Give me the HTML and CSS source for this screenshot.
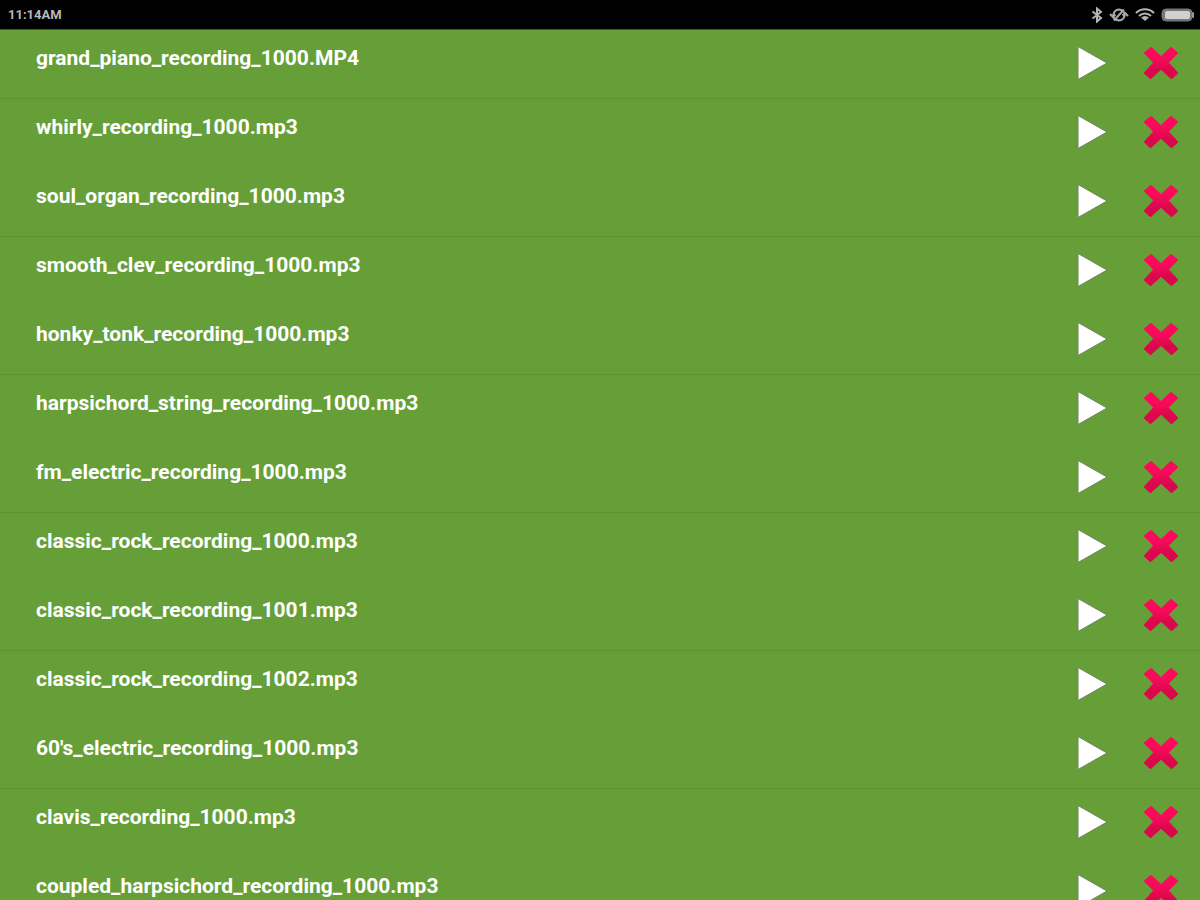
FILE: index.html
```
<!DOCTYPE html>
<html lang="en">
<head>
    <meta charset="UTF-8">
    <meta name="viewport" content="width=device-width, initial-scale=1.0">
    <title>Recordings</title>
    <link rel="stylesheet" href="styles.css">
</head>
<body>
    <!-- Shared icons -->
    <svg class="sprite" width="0" height="0" aria-hidden="true">
        <defs>
            <linearGradient id="red" x1="0" y1="0" x2="0" y2="1">
                <stop offset="0.3" stop-color="#fb0a5c"/>
                <stop offset="0.75" stop-color="#d9084c"/>
            </linearGradient>
            <symbol id="play" viewBox="0 0 32 36">
                <path d="M2 1.500L31 18L2 34.500Z" fill="#fff" stroke="#6f8560" stroke-width="1"/>
            </symbol>
            <symbol id="delete" viewBox="0 0 36 36">
                <path d="M8 3L18 12.500L28 3L34 8L24.500 17.500L34 28L28.500 33L18 23.500L7.500 33L2 28L11.500 17.500L2 8Z" fill="url(#red)" stroke="url(#red)" stroke-width="2" stroke-linejoin="round"/>
            </symbol>
        </defs>
    </svg>

    <header class="status-bar">
        <span class="time">11:14AM</span>
        <div class="status-icons">
            <svg width="12" height="16" viewBox="0 0 12 16">
                <path d="M1.500 4.500L10 11L6 14.500V1.500L10 5L1.500 11.500" fill="none" stroke="#b4b4b4" stroke-width="2"/>
            </svg>
            <svg width="20" height="16" viewBox="0 0 20 16">
                <path d="M5 12C3 6 6 2.500 10.500 2.500L13.500 3.500M15 4.500C17 10 14 13.500 9.500 13.500L6.500 12.500M5 13.500L15 2.500M1 7L4 10L6.500 7.500M13.500 8.500L16 6L19 9" fill="none" stroke="#a8a8a8" stroke-width="2"/>
            </svg>
            <svg width="20" height="16" viewBox="0 0 20 16">
                <path d="M1 6C6 1 14 1 19 6M4 9C7.500 5.500 12.500 5.500 16 9" fill="none" stroke="#b4b4b4" stroke-width="2"/>
                <path d="M6 10.500C8.500 8.500 11.500 8.500 14 10.500L10 14Z" fill="#b4b4b4"/>
            </svg>
            <svg width="34" height="16" viewBox="0 0 34 16">
                <rect x="1" y="2" width="30" height="12" rx="4" fill="#777" stroke="#777" stroke-width="1"/>
                <rect x="4" y="4" width="25" height="8" rx="2" fill="#d0d0d0"/>
                <rect x="31" y="5" width="2" height="6" rx="1" fill="#999"/>
            </svg>
        </div>
    </header>

    <ul class="recordings">
        <li class="recording">
            <span class="name">grand_piano_recording_1000.MP4</span>
            <button class="btn-play" aria-label="Play"><svg width="32" height="36"><use href="#play"/></svg></button>
            <button class="btn-delete" aria-label="Delete"><svg width="36" height="36"><use href="#delete"/></svg></button>
        </li>
        <li class="recording">
            <span class="name">whirly_recording_1000.mp3</span>
            <button class="btn-play" aria-label="Play"><svg width="32" height="36"><use href="#play"/></svg></button>
            <button class="btn-delete" aria-label="Delete"><svg width="36" height="36"><use href="#delete"/></svg></button>
        </li>
        <li class="recording">
            <span class="name">soul_organ_recording_1000.mp3</span>
            <button class="btn-play" aria-label="Play"><svg width="32" height="36"><use href="#play"/></svg></button>
            <button class="btn-delete" aria-label="Delete"><svg width="36" height="36"><use href="#delete"/></svg></button>
        </li>
        <li class="recording">
            <span class="name">smooth_clev_recording_1000.mp3</span>
            <button class="btn-play" aria-label="Play"><svg width="32" height="36"><use href="#play"/></svg></button>
            <button class="btn-delete" aria-label="Delete"><svg width="36" height="36"><use href="#delete"/></svg></button>
        </li>
        <li class="recording">
            <span class="name">honky_tonk_recording_1000.mp3</span>
            <button class="btn-play" aria-label="Play"><svg width="32" height="36"><use href="#play"/></svg></button>
            <button class="btn-delete" aria-label="Delete"><svg width="36" height="36"><use href="#delete"/></svg></button>
        </li>
        <li class="recording">
            <span class="name">harpsichord_string_recording_1000.mp3</span>
            <button class="btn-play" aria-label="Play"><svg width="32" height="36"><use href="#play"/></svg></button>
            <button class="btn-delete" aria-label="Delete"><svg width="36" height="36"><use href="#delete"/></svg></button>
        </li>
        <li class="recording">
            <span class="name">fm_electric_recording_1000.mp3</span>
            <button class="btn-play" aria-label="Play"><svg width="32" height="36"><use href="#play"/></svg></button>
            <button class="btn-delete" aria-label="Delete"><svg width="36" height="36"><use href="#delete"/></svg></button>
        </li>
        <li class="recording">
            <span class="name">classic_rock_recording_1000.mp3</span>
            <button class="btn-play" aria-label="Play"><svg width="32" height="36"><use href="#play"/></svg></button>
            <button class="btn-delete" aria-label="Delete"><svg width="36" height="36"><use href="#delete"/></svg></button>
        </li>
        <li class="recording">
            <span class="name">classic_rock_recording_1001.mp3</span>
            <button class="btn-play" aria-label="Play"><svg width="32" height="36"><use href="#play"/></svg></button>
            <button class="btn-delete" aria-label="Delete"><svg width="36" height="36"><use href="#delete"/></svg></button>
        </li>
        <li class="recording">
            <span class="name">classic_rock_recording_1002.mp3</span>
            <button class="btn-play" aria-label="Play"><svg width="32" height="36"><use href="#play"/></svg></button>
            <button class="btn-delete" aria-label="Delete"><svg width="36" height="36"><use href="#delete"/></svg></button>
        </li>
        <li class="recording">
            <span class="name">60's_electric_recording_1000.mp3</span>
            <button class="btn-play" aria-label="Play"><svg width="32" height="36"><use href="#play"/></svg></button>
            <button class="btn-delete" aria-label="Delete"><svg width="36" height="36"><use href="#delete"/></svg></button>
        </li>
        <li class="recording">
            <span class="name">clavis_recording_1000.mp3</span>
            <button class="btn-play" aria-label="Play"><svg width="32" height="36"><use href="#play"/></svg></button>
            <button class="btn-delete" aria-label="Delete"><svg width="36" height="36"><use href="#delete"/></svg></button>
        </li>
        <li class="recording">
            <span class="name">coupled_harpsichord_recording_1000.mp3</span>
            <button class="btn-play" aria-label="Play"><svg width="32" height="36"><use href="#play"/></svg></button>
            <button class="btn-delete" aria-label="Delete"><svg width="36" height="36"><use href="#delete"/></svg></button>
        </li>
    </ul>
</body>
</html>
```

FILE: styles.css
```
/* General Styles */
* {
    box-sizing: border-box;
}

body {
    font-family: Roboto, sans-serif;
    display: flex;
    flex-direction: column;
    height: 100vh;
    margin: 0;
    overflow: hidden;
    background-color: #669f38;
    color: #fff;
}

.sprite {
    position: absolute;
}

/* Status bar */
.status-bar {
    display: flex;
    flex-shrink: 0;
    justify-content: space-between;
    align-items: center;
    height: 30px;
    padding: 0 5px 0 8px;
    background-color: #000;
    border-bottom: 1px solid #3c5a24;
    color: #b8b8b8;
}

.time {
    font-size: 13px;
    font-weight: 700;
    line-height: 16px;
}

.status-icons {
    display: flex;
    gap: 6px;
}

/* List of recordings */
.recordings {
    flex: 1;
    min-height: 0;
    margin: 0;
    padding: 0;
    overflow-y: auto;
    scrollbar-width: none;
    list-style: none;
}

.recording {
    display: flex;
    align-items: flex-start;
    height: 69px;
    padding: 15px 21px 0 36px;
    border-bottom: 1px solid #5c9233;
}

.recording:nth-child(even) {
    border-bottom-color: #639b37;
}

.name {
    flex: 1;
    font-size: 21px;
    font-weight: 700;
    line-height: 26px;
}

button {
    padding: 0;
    border: none;
    background: none;
    cursor: pointer;
}

button svg {
    display: block;
}

.btn-delete {
    margin-left: 35px;
}
```
